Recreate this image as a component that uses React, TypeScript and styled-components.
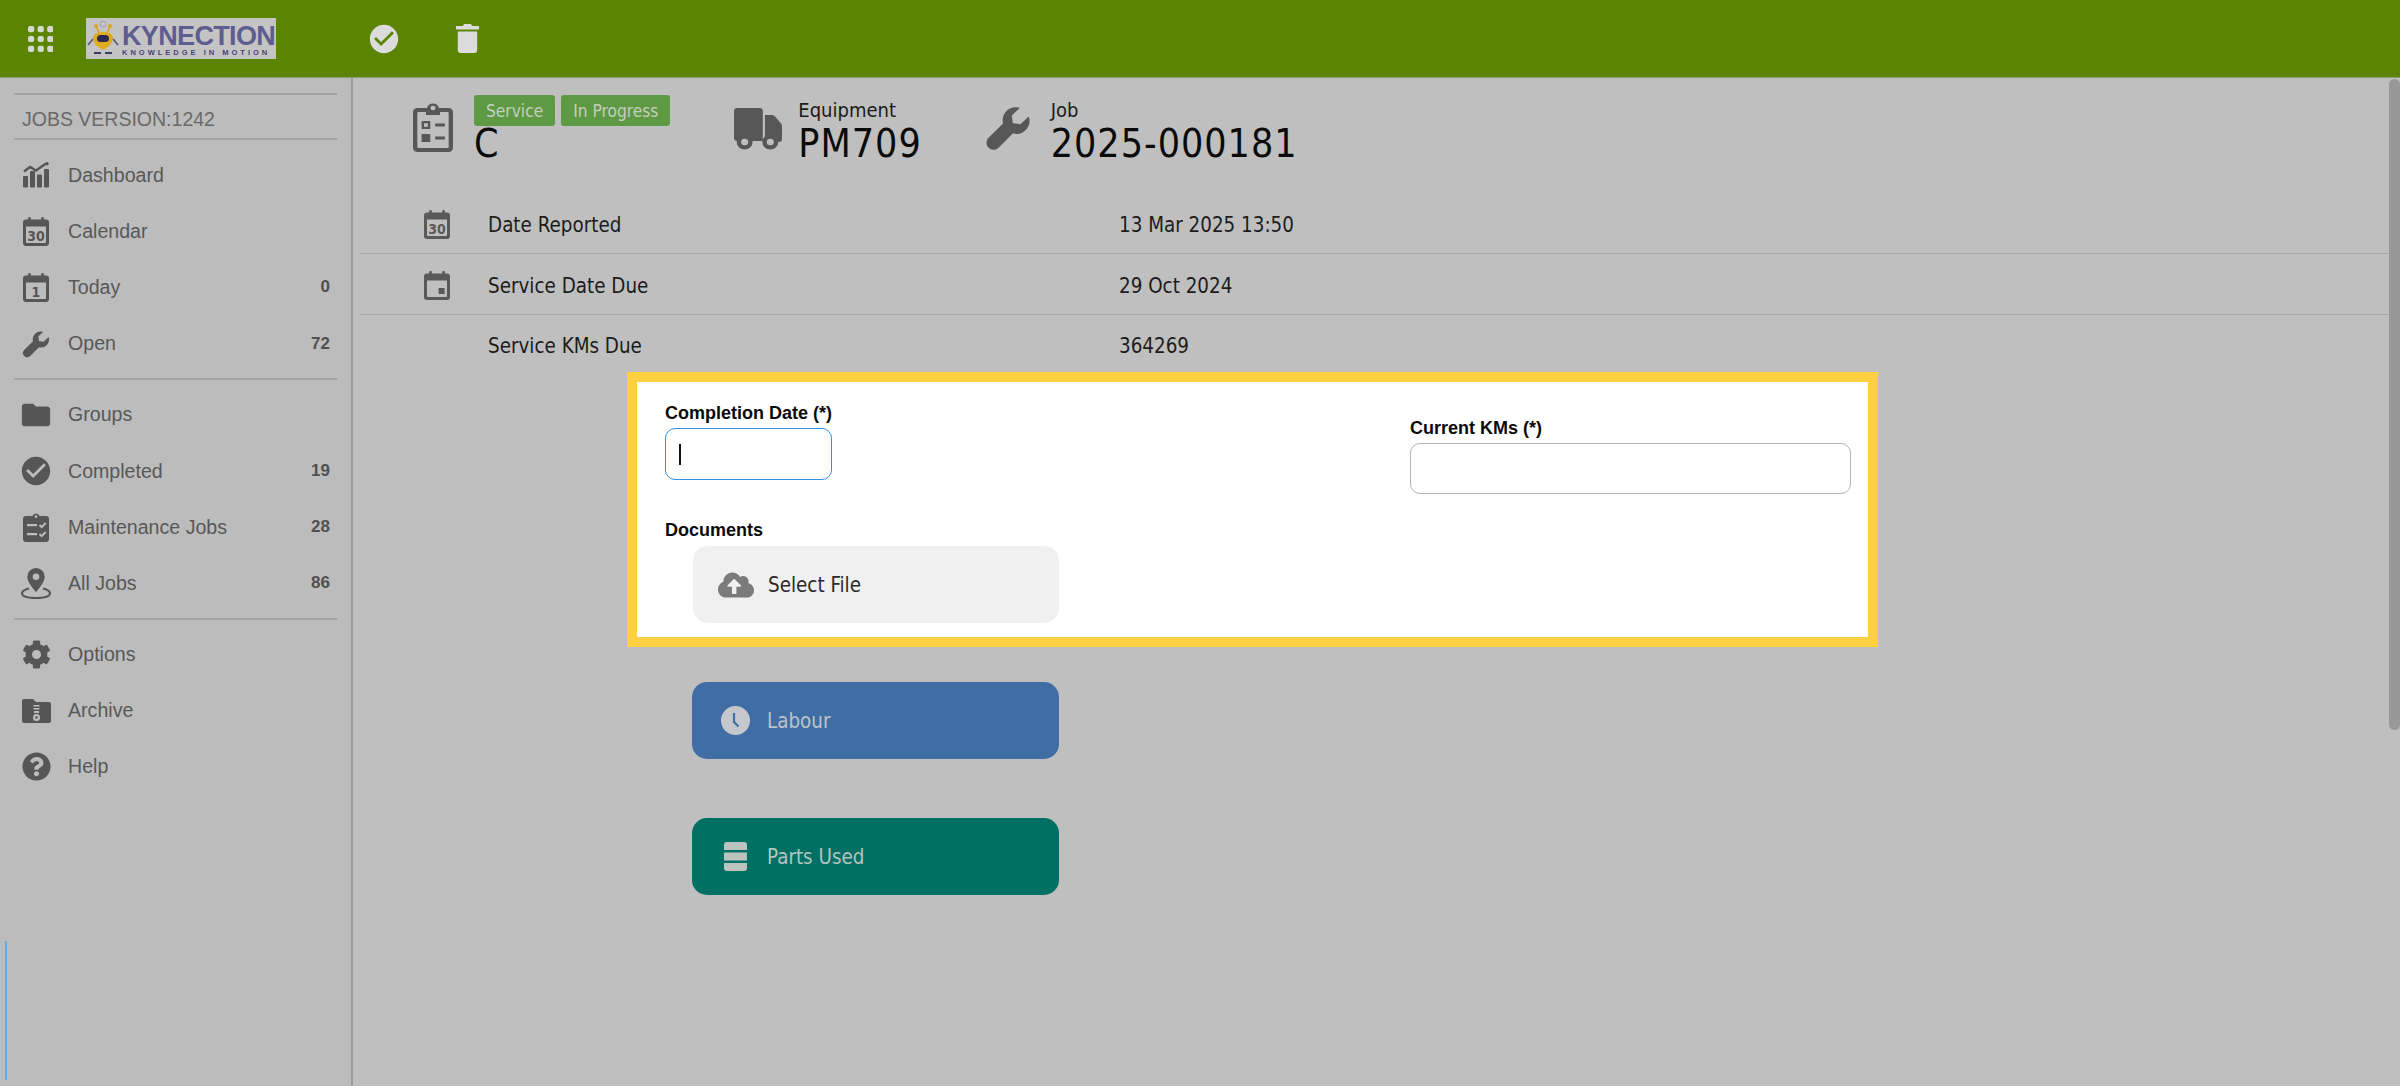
import React from "react";
import styled, { createGlobalStyle } from "styled-components";
import { FaCog, FaQuestionCircle, FaCloudUploadAlt } from "react-icons/fa";
import { MdCheckCircle, MdFolder } from "react-icons/md";

const Global = createGlobalStyle`
  html, body { margin: 0; padding: 0; height: 100%; overflow: hidden; background: #bfbfbf; }
  #root { height: 100%; }
  * { box-sizing: border-box; }
`;

const ARIAL = `"Liberation Sans", Arial, sans-serif`;
const TAHOMA = `"DejaVu Sans Condensed", "DejaVu Sans", sans-serif`;

const Page = styled.div`
  display: flex;
  flex-direction: column;
  width: 2400px;
  height: 1086px;
  overflow: hidden;
  font-family: ${ARIAL};
`;

const TopBar = styled.header`
  flex: 0 0 78px;
  display: flex;
  align-items: center;
  padding-left: 28px;
  background: #5b8400;
  border-bottom: 1px solid #8b9f70;
`;

const BarIcon = styled.span<{ $left: number }>`
  display: inline-flex;
  margin-left: ${(p) => p.$left}px;
  color: #dcdcdc;
`;

const LogoBox = styled.div`
  display: flex;
  align-items: center;
  width: 190px;
  height: 41px;
  margin-left: 33px;
  background: #c4c4c4;
  overflow: hidden;
`;

const LogoWords = styled.div`
  display: flex;
  flex-direction: column;
  margin-left: 2px;
  padding-top: 4px;
`;

const LogoName = styled.span`
  font-family: ${ARIAL};
  font-weight: 700;
  font-size: 27px;
  line-height: 24px;
  letter-spacing: -0.65px;
  color: #5f5d90;
  white-space: nowrap;
`;

const LogoTag = styled.span`
  font-family: ${ARIAL};
  font-weight: 700;
  font-size: 7.5px;
  line-height: 9px;
  letter-spacing: 3px;
  color: #45437a;
  white-space: nowrap;
`;

const Body = styled.div`
  flex: 1;
  display: flex;
  min-height: 0;
`;

const Sidebar = styled.aside`
  position: relative;
  flex: 0 0 353px;
  padding: 15px 14px 0;
  background: #bcbcbc;
  border-right: 2px solid #9c9c9c;
`;

const Divider = styled.hr`
  width: 323px;
  height: 2px;
  margin: 0;
  border: 0;
  background: #a3a3a3;
`;

const Version = styled.div`
  display: flex;
  align-items: center;
  height: 43px;
  padding: 5px 0 0 8px;
  font-size: 19.5px;
  color: #696969;
`;

const NavGroup = styled.nav`
  padding: 7px 0 6px;
`;

const NavItem = styled.div`
  display: flex;
  align-items: center;
  height: 56.2px;
  padding: 0 7px 0 7px;
  color: #585858;
  font-size: 19.6px;
`;

const NavIcon = styled.span`
  display: flex;
  align-items: center;
  justify-content: center;
  flex: 0 0 30px;
  min-width: 0;
  height: 30px;
  margin-right: 17px;
  color: #565656;

  svg {
    flex: none;
  }
`;

const NavLabel = styled.span`
  flex: 1;
`;

const NavCount = styled.span`
  font-weight: 700;
  font-size: 17px;
  color: #505050;
`;

const ProgressLine = styled.div`
  position: absolute;
  left: 5px;
  top: 863px;
  width: 2px;
  height: 139px;
  background: #62addf;
`;

const Main = styled.main`
  position: relative;
  flex: 1;
  padding-left: 7px;
  background: #bfbfbf;
  font-family: ${TAHOMA};
  color: #111;
`;

const Scrollbar = styled.div`
  position: absolute;
  top: 1px;
  right: 0;
  width: 11px;
  height: 651px;
  border-radius: 6px;
  background: #989898;
`;

const TitleRow = styled.div`
  display: flex;
  height: 115px;
  padding: 17px 0 0 53px;
`;

const TitleGroup = styled.div<{ $right: number }>`
  display: flex;
  margin-right: ${(p) => p.$right}px;
`;

const TitleIcon = styled.span<{ $top: number; $gap: number }>`
  display: flex;
  align-self: flex-start;
  margin-top: ${(p) => p.$top}px;
  margin-right: ${(p) => p.$gap}px;
  color: #575757;
`;

const TitleText = styled.div`
  display: flex;
  flex-direction: column;
`;

const Badges = styled.div`
  display: flex;
  gap: 6px;
  height: 31px;
`;

const Badge = styled.span`
  display: flex;
  align-items: center;
  padding: 0 12px;
  border-radius: 3px;
  background: #5d9a43;
  color: #c6cfc0;
  font-size: 17.2px;
`;

const Eyebrow = styled.span`
  height: 31px;
  line-height: 30px;
  font-size: 20px;
  color: #1a1a1a;
`;

const BigValue = styled.span`
  height: 40px;
  line-height: 36px;
  font-size: 39px;
  letter-spacing: 1px;
  color: #0a0a0a;
`;

const InfoList = styled.section`
  margin-right: 11px;
`;

const InfoRow = styled.div<{ $line?: boolean }>`
  display: grid;
  grid-template-columns: 128px 631px 1fr;
  align-items: center;
  height: 61px;
  padding-top: ${(p) => (p.$line ? 3 : 0)}px;
  border-bottom: ${(p) => (p.$line ? "1px solid #a8a8a8" : "0")};
  font-size: 20.4px;
  color: #1c1c1c;
`;

const InfoIcon = styled.span`
  display: flex;
  justify-content: center;
  padding-left: 26px;
  color: #595959;
`;

const ActionList = styled.div`
  display: flex;
  flex-direction: column;
  gap: 59px;
  width: 367px;
  margin: 306px 0 0 332px;
`;

const ActionButton = styled.div<{ $bg: string; $fg: string }>`
  display: flex;
  align-items: center;
  height: 77px;
  padding-left: 25px;
  border-radius: 15px;
  background: ${(p) => p.$bg};
  color: ${(p) => p.$fg};
  font-family: ${TAHOMA};
  font-size: 20.4px;
`;

const ActionIcon = styled.span`
  display: flex;
  justify-content: center;
  flex: 0 0 36px;
  margin-right: 14px;
`;

const FormPanel = styled.section`
  position: absolute;
  left: 274px;
  top: 294px;
  display: grid;
  grid-template-columns: 745px 441px;
  grid-template-rows: 137px 1fr;
  width: 1251px;
  height: 275px;
  padding: 0 0 0 28px;
  background: #fff;
  border: 10px solid #ffd040;
  font-family: ${ARIAL};
`;

const Field = styled.div<{ $top: number }>`
  padding-top: ${(p) => p.$top}px;
`;

const FieldLabel = styled.label`
  display: block;
  height: 26px;
  font-weight: 700;
  font-size: 18px;
  line-height: 22px;
  color: #0a0a0a;
`;

const TextBox = styled.div<{ $focus?: boolean; $width: number }>`
  display: flex;
  align-items: center;
  width: ${(p) => p.$width}px;
  height: ${(p) => (p.$focus ? 52 : 51)}px;
  padding-left: 13px;
  border: 1.5px solid ${(p) => (p.$focus ? "#2f8fe0" : "#b4b4ba")};
  border-radius: 10px;
  background: #fff;
`;

const Caret = styled.span`
  width: 2px;
  height: 21px;
  background: #111;
`;

const Documents = styled.div`
  grid-column: 1 / 3;
  display: flex;
  flex-direction: column;
`;

const DocumentButton = styled(ActionButton)`
  width: 366px;
  margin: 1px 0 0 28px;
`;

const G = "#565656";

const Dots = () => (
  <svg width="25" height="26" viewBox="0 0 25 26" fill="#d6d8d2">
    {[0, 9.9, 19.8].map((y) =>
      [0, 9.6, 19.2].map((x) => <rect key={`${x}-${y}`} x={x} y={y} width="6.2" height="6.2" rx="2" />)
    )}
  </svg>
);

const Robot = () => (
  <svg width="34" height="40" viewBox="0 0 34 40" style={{ flex: "0 0 34px" }}>
    <circle cx="17" cy="5" r="3" fill="none" stroke="#9b9bb0" strokeWidth="1" />
    <path d="M10 7 L13 14 M24 7 L21 14" stroke="#d9a520" strokeWidth="1.6" />
    <circle cx="10" cy="7" r="2" fill="#d9a520" />
    <circle cx="24" cy="7" r="2" fill="#d9a520" />
    <path d="M7 19 Q7 13 17 13 Q27 13 27 19 Q27 26 17 31 Q7 26 7 19Z" fill="#e0ab1d" />
    <rect x="11" y="16" width="12" height="7" rx="3.5" fill="#2b2b52" />
    <path d="M7 20 L2 26 M27 20 L32 26" stroke="#55557a" strokeWidth="1.6" />
    <rect x="8" y="33" width="7" height="2" fill="#3b3b60" />
    <rect x="19" y="33" width="7" height="2" fill="#3b3b60" />
  </svg>
);

const Trash = () => (
  <svg width="23" height="29" viewBox="0 0 23 29" fill="#dcdcdc">
    <path d="M8 0h7l1 2h7v3.4H0V2h7z" />
    <path d="M1.8 7.5h19.4V26a3 3 0 0 1-3 3H4.800a3 3 0 0 1-3-3z" />
  </svg>
);

const Bars = () => (
  <svg width="26" height="26" viewBox="0 0 26 26" fill={G}>
    <path d="M1 9.500 L7 5 L13 8.500 L23 1.500" fill="none" stroke={G} strokeWidth="2.400" />
    <circle cx="24" cy="1.800" r="1.800" />
    <rect x="0" y="14" width="5" height="11.600" rx="1" />
    <rect x="7" y="9" width="5" height="16.600" rx="1" />
    <rect x="14" y="12.500" width="5" height="13.100" rx="1" />
    <rect x="21" y="7" width="5" height="18.600" rx="1" />
  </svg>
);

const Calendar = ({ mark, color = G }: { mark: string; color?: string }) => (
  <svg width="26" height="29" viewBox="0 0 26 29">
    <rect x="5.200" y="0" width="2.600" height="5" rx="1" fill={color} />
    <rect x="18.200" y="0" width="2.600" height="5" rx="1" fill={color} />
    <path d="M3 2.600h20a3 3 0 0 1 3 3V26a3 3 0 0 1-3 3H3a3 3 0 0 1-3-3V5.600a3 3 0 0 1 3-3zM3 9.400V25a1 1 0 0 0 1 1h18a1 1 0 0 0 1-1V9.400z" fill={color} fillRule="evenodd" />
    {mark === "dot" ? (
      <rect x="14.600" y="17" width="6" height="6" fill={color} />
    ) : (
      <text x="13" y="23.500" textAnchor="middle" fontFamily="'DejaVu Sans Condensed','DejaVu Sans',sans-serif" fontWeight="700" fontSize="14" fill={color}>
        {mark}
      </text>
    )}
  </svg>
);

const Clip = () => (
  <svg width="26" height="29" viewBox="0 0 26 29" fill={G}>
    <path fillRule="evenodd" d="M3 3h6.400a3.800 3.800 0 0 1 7.200 0H23a3 3 0 0 1 3 3v20a3 3 0 0 1-3 3H3a3 3 0 0 1-3-3V6a3 3 0 0 1 3-3zM13 2.200a1.400 1.400 0 1 0 0 2.800 1.400 1.400 0 0 0 0-2.800zM4 11v2.200h10V11zM4 20v2.200h10V20z" />
    <path d="M16.500 12l2.200 2.200 4-4.200M16.500 21l2.200 2.200 4-4.200" fill="none" stroke="#bcbcbc" strokeWidth="1.900" />
  </svg>
);

const Pin = () => (
  <svg width="30" height="31" viewBox="0 0 30 31" fill={G}>
    <path fillRule="evenodd" d="M15 0a8.700 8.700 0 0 1 8.700 8.700C23.700 15 15 24 15 24S6.300 15 6.300 8.700A8.700 8.700 0 0 1 15 0zm0 5.400a3.300 3.300 0 1 0 0 6.600 3.300 3.300 0 0 0 0-6.600z" />
    <path d="M8 20.500C3.600 21.600 1 23.400 1 25.500 1 28.500 7.300 30 15 30s14-1.500 14-4.500c0-2.100-2.600-3.900-7-5" fill="none" stroke={G} strokeWidth="2.200" />
  </svg>
);

const ArchiveFolder = () => (
  <svg width="29" height="24" viewBox="0 0 29 24" fill={G}>
    <path fillRule="evenodd" d="M2 0h9l3 3h13a2 2 0 0 1 2 2v17a2 2 0 0 1-2 2H2a2 2 0 0 1-2-2V2a2 2 0 0 1 2-2zM11.500 6v1.500h6V6zm0 3v1.500h6V9zm.5 3v2h5v-2zm2.500 3a3.500 3.500 0 1 0 0 7 3.500 3.500 0 0 0 0-7zm0 2.200a1.300 1.300 0 1 1 0 2.600 1.300 1.300 0 0 1 0-2.600z" />
  </svg>
);

const Wrench = ({ size }: { size: number }) => (
  <svg width={size} height={size} viewBox="0 0 24 24" fill="currentColor">
    <path d="M16 1.200a6.800 6.800 0 0 0-6.600 8.400L1.600 17.400a3.700 3.700 0 0 0 5.200 5.200l7.800-7.800a6.800 6.800 0 0 0 8.200-8.800L18.500 10l-4-.5-.5-4 4.200-4.100a7 7 0 0 0-2.200-.2z" />
  </svg>
);

const JobSheet = () => (
  <svg width="40" height="49" viewBox="0 0 37 49" preserveAspectRatio="none" fill="#575757">
    <path fillRule="evenodd" d="M4 5h9a5.600 5.600 0 0 1 11 0h9a4 4 0 0 1 4 4v36a4 4 0 0 1-4 4H4a4 4 0 0 1-4-4V9a4 4 0 0 1 4-4zm14.500-2.300a2.300 2.300 0 1 0 0 4.600 2.300 2.300 0 0 0 0-4.600zM4 10v34a1 1 0 0 0 1 1h27a1 1 0 0 0 1-1V10a1 1 0 0 0-1-1H25v3H12V9H5a1 1 0 0 0-1 1z" />
    <path fillRule="evenodd" d="M8 18h8v8H8zm2.200 2.200v3.600h3.600v-3.600z" />
    <rect x="8" y="31" width="8" height="8" />
    <rect x="20.500" y="20.500" width="9" height="3" />
    <rect x="20.500" y="33.500" width="9" height="3" />
  </svg>
);

const Truck = () => (
  <svg width="48" height="42" viewBox="0 0 45 42" preserveAspectRatio="none" fill="#575757">
    <path d="M3 0h21a3 3 0 0 1 3 3v30H3a3 3 0 0 1-3-3V3a3 3 0 0 1 3-3z" />
    <path d="M29 7h6c1.500 0 2.700.6 3.700 1.800l5 6.200c.8 1 1.300 2.200 1.300 3.600V31a3 3 0 0 1-3 3H29z" />
    <circle cx="10" cy="34" r="7.500" />
    <circle cx="34" cy="34" r="7.500" />
    <circle cx="10" cy="34" r="3.300" fill="#bfbfbf" />
    <circle cx="34" cy="34" r="3.300" fill="#bfbfbf" />
  </svg>
);

const Clock = () => (
  <svg width="29" height="29" viewBox="0 0 29 29">
    <circle cx="14.500" cy="14.500" r="14.500" fill="#c4c8cc" />
    <path d="M13 7v9l4.500 4.500" fill="none" stroke="#406ea4" strokeWidth="2.200" />
  </svg>
);

const Parts = () => (
  <svg width="23" height="29" viewBox="0 0 23 29" fill="#bcc4c0">
    <path d="M3 0h17a3 3 0 0 1 3 3v5H0V3a3 3 0 0 1 3-3z" />
    <rect x="0" y="10.500" width="23" height="8" />
    <path d="M0 21h23v5a3 3 0 0 1-3 3H3a3 3 0 0 1-3-3z" />
  </svg>
);

const navGroups = [
  [
    { icon: <Bars />, label: "Dashboard" },
    { icon: <Calendar mark="30" />, label: "Calendar" },
    { icon: <Calendar mark="1" />, label: "Today", count: "0" },
    { icon: <Wrench size={28} />, label: "Open", count: "72" },
  ],
  [
    { icon: <MdFolder size={34} />, label: "Groups" },
    { icon: <MdCheckCircle size={34} />, label: "Completed", count: "19" },
    { icon: <Clip />, label: "Maintenance Jobs", count: "28" },
    { icon: <Pin />, label: "All Jobs", count: "86" },
  ],
  [
    { icon: <FaCog size={29} />, label: "Options" },
    { icon: <ArchiveFolder />, label: "Archive" },
    { icon: <FaQuestionCircle size={29} />, label: "Help" },
  ],
];

export default function App() {
  return (
    <Page>
      <Global />
      <TopBar>
        <BarIcon $left={0}>
          <Dots />
        </BarIcon>
        <LogoBox>
          <Robot />
          <LogoWords>
            <LogoName>KYNECTION</LogoName>
            <LogoTag>KNOWLEDGE IN MOTION</LogoTag>
          </LogoWords>
        </LogoBox>
        <BarIcon $left={91}>
          <MdCheckCircle size={34} />
        </BarIcon>
        <BarIcon $left={55}>
          <Trash />
        </BarIcon>
      </TopBar>
      <Body>
        <Sidebar>
          <Divider />
          <Version>JOBS VERSION:1242</Version>
          <Divider />
          {navGroups.map((group, i) => (
            <React.Fragment key={i}>
              {i > 0 && <Divider />}
              <NavGroup>
                {group.map((item) => (
                  <NavItem key={item.label}>
                    <NavIcon>{item.icon}</NavIcon>
                    <NavLabel>{item.label}</NavLabel>
                    {item.count && <NavCount>{item.count}</NavCount>}
                  </NavItem>
                ))}
              </NavGroup>
            </React.Fragment>
          ))}
          <ProgressLine />
        </Sidebar>
        <Main>
          <TitleRow>
            <TitleGroup $right={64}>
              <TitleIcon $top={8} $gap={21}>
                <JobSheet />
              </TitleIcon>
              <TitleText>
                <Badges>
                  <Badge>Service</Badge>
                  <Badge>In Progress</Badge>
                </Badges>
                <BigValue>C</BigValue>
              </TitleText>
            </TitleGroup>
            <TitleGroup $right={63}>
              <TitleIcon $top={13} $gap={16}>
                <Truck />
              </TitleIcon>
              <TitleText>
                <Eyebrow>Equipment</Eyebrow>
                <BigValue>PM709</BigValue>
              </TitleText>
            </TitleGroup>
            <TitleGroup $right={0}>
              <TitleIcon $top={10} $gap={20}>
                <Wrench size={46} />
              </TitleIcon>
              <TitleText>
                <Eyebrow>Job</Eyebrow>
                <BigValue>2025-000181</BigValue>
              </TitleText>
            </TitleGroup>
          </TitleRow>
          <InfoList>
            <InfoRow $line>
              <InfoIcon>
                <Calendar mark="30" color="#595959" />
              </InfoIcon>
              <span>Date Reported</span>
              <span>13 Mar 2025 13:50</span>
            </InfoRow>
            <InfoRow $line>
              <InfoIcon>
                <Calendar mark="dot" color="#595959" />
              </InfoIcon>
              <span>Service Date Due</span>
              <span>29 Oct 2024</span>
            </InfoRow>
            <InfoRow>
              <span />
              <span>Service KMs Due</span>
              <span>364269</span>
            </InfoRow>
          </InfoList>
          <ActionList>
            <ActionButton $bg="#406ea4" $fg="#bcc2ca">
              <ActionIcon>
                <Clock />
              </ActionIcon>
              Labour
            </ActionButton>
            <ActionButton $bg="#007065" $fg="#b4c4bf">
              <ActionIcon>
                <Parts />
              </ActionIcon>
              Parts Used
            </ActionButton>
          </ActionList>
          <FormPanel>
            <Field $top={20}>
              <FieldLabel>Completion Date (*)</FieldLabel>
              <TextBox $focus $width={167}>
                <Caret />
              </TextBox>
            </Field>
            <Field $top={35}>
              <FieldLabel>Current KMs (*)</FieldLabel>
              <TextBox $width={441} />
            </Field>
            <Documents>
              <FieldLabel>Documents</FieldLabel>
              <DocumentButton $bg="#f0f0f0" $fg="#2a2a2a">
                <ActionIcon>
                  <FaCloudUploadAlt size={36} color="#7b7b7b" />
                </ActionIcon>
                Select File
              </DocumentButton>
            </Documents>
          </FormPanel>
          <Scrollbar />
        </Main>
      </Body>
    </Page>
  );
}
